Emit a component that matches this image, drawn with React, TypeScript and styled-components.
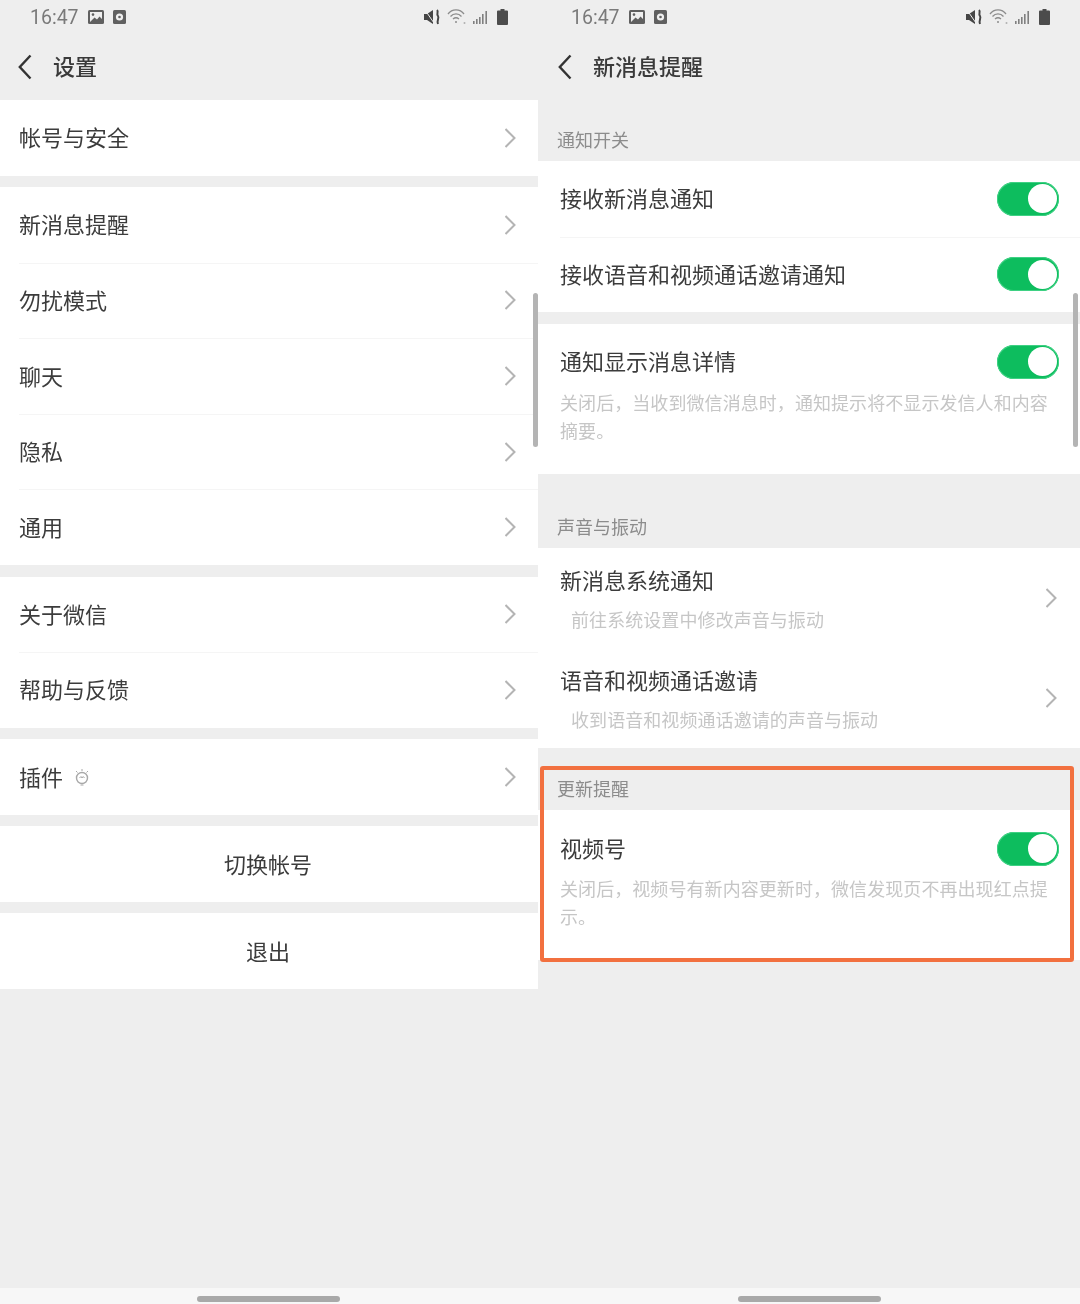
import React from "react";
import styled, { createGlobalStyle } from "styled-components";

const Global = createGlobalStyle`
  html, body { margin: 0; padding: 0; background: #eeeeee; }
  * { box-sizing: border-box; }
`;

const Screen = styled.div`
  display: grid;
  grid-template-columns: 538px 542px;
  width: 1080px;
  height: 1304px;
  overflow: hidden;
  font-family: "Noto Sans CJK SC", "Noto Sans", sans-serif;
  filter: blur(0.55px);
`;

const Panel = styled.section<{ $shift: number }>`
  --shift: ${(p) => p.$shift}px;
  position: relative;
  display: flex;
  flex-direction: column;
  height: 1304px;
  background: #eeeeee;
`;

const StatusBar = styled.div`
  display: flex;
  align-items: center;
  height: 34px;
  padding: 0 30px 0 calc(30px + var(--shift));
`;

const Time = styled.span`
  font-family: "Roboto", sans-serif;
  font-size: 19.5px;
  color: #7a7a7a;
`;

const StatusLeft = styled.div`
  display: flex;
  align-items: center;
  gap: 9px;
  flex: 1;
`;

const StatusRight = styled.div`
  display: flex;
  align-items: center;
  gap: 7px;
`;

const Header = styled.header`
  display: flex;
  align-items: center;
  height: 66px;
  padding-left: calc(18px + var(--shift) * 0.67);
`;

const HeaderTitle = styled.h1`
  margin: -4px 0 0 21px;
  font-size: 22px;
  line-height: 30px;
  font-weight: 500;
  color: #3a3a3a;
`;

const Scroll = styled.div`
  flex: 1;
`;

const Group = styled.div`
  background: #ffffff;
  margin-bottom: 11.5px;
`;

const Row = styled.div<{ $center?: boolean }>`
  display: flex;
  align-items: center;
  justify-content: ${(p) => (p.$center ? "center" : "space-between")};
  height: 75.6px;
  padding: 0 21px 0 calc(19px + var(--shift));
  position: relative;
  & + &::before {
    content: "";
    position: absolute;
    top: 0;
    left: calc(19px + var(--shift));
    right: 0;
    height: 1px;
    background: #f5f5f5;
  }
`;

const RowLabel = styled.span`
  display: flex;
  align-items: center;
  gap: 12px;
  margin-bottom: 3px;
  font-size: 22px;
  line-height: 30px;
  color: #3c3c3c;
`;

const Section = styled.div<{ $height: number }>`
  display: flex;
  align-items: flex-end;
  height: ${(p) => p.$height}px;
  padding: 0 0 9px 19px;
  font-size: 18px;
  line-height: 26px;
  color: #8c8c8c;
`;

const DetailRow = styled.div<{ $top: number; $height: number }>`
  position: relative;
  height: ${(p) => p.$height}px;
  padding: ${(p) => p.$top}px 21px 0 22px;
  background: #ffffff;
`;

const DetailHead = styled.div`
  display: flex;
  align-items: center;
  justify-content: space-between;
  height: 30px;
`;

const Description = styled.p<{ $gap: number }>`
  margin: ${(p) => p.$gap}px 0 0;
  width: 494px;
  font-size: 18px;
  line-height: 28px;
  letter-spacing: 0.07px;
  color: #c6c6c6;
`;

const LinkRow = styled.div<{ $height: number }>`
  display: flex;
  align-items: center;
  justify-content: space-between;
  height: ${(p) => p.$height}px;
  padding: 0 22px 0 22px;
  background: #ffffff;
  position: relative;
  & + &::before {
    content: "";
    position: absolute;
    top: 0;
    left: 22px;
    right: 0;
    height: 1px;
    background: #f5f5f5;
  }
`;

const LinkText = styled.div`
  display: flex;
  flex-direction: column;
  padding-top: 1px;
`;

const LinkSub = styled.span`
  margin: 8px 0 0 11px;
  font-size: 18px;
  line-height: 28px;
  letter-spacing: 0.07px;
  color: #c6c6c6;
`;

const Switch = styled.span`
  display: flex;
  justify-content: flex-end;
  align-items: center;
  width: 62px;
  height: 34px;
  padding-right: 2px;
  border-radius: 17px;
  background: #0dbd5e;
  box-shadow: inset 0 0 0 1px #3fd184;
`;

const Knob = styled.span`
  width: 29px;
  height: 29px;
  border-radius: 50%;
  background: #ffffff;
`;

const NavBar = styled.div`
  display: flex;
  justify-content: center;
  align-items: flex-end;
  height: 16px;
  padding: 0 calc(2px - var(--shift) * 0.67) 2px 0;
  background: #f7f7f7;
`;

const Pill = styled.span`
  width: 143px;
  height: 6px;
  border-radius: 3px;
  background: #a9a9a9;
`;

const ScrollThumb = styled.span<{ $left: number }>`
  position: absolute;
  left: ${(p) => p.$left}px;
  top: 293px;
  width: 5px;
  height: 154px;
  border-radius: 3px;
  background: #b4b4b4;
`;

const Highlight = styled.div`
  position: absolute;
  left: 2px;
  top: 766px;
  width: 534px;
  height: 196px;
  border: 4px solid #f2703f;
  border-radius: 3px;
  pointer-events: none;
`;

const PluginSvg = styled.svg`
  margin-top: 4px;
  margin-left: -1px;
`;

const BatterySvg = styled.svg`
  margin-left: 2px;
`;

const Chevron = () => (
  <svg width="12" height="22" viewBox="0 0 12 22" fill="none">
    <path d="M.5 2 9.5 11 .5 20" stroke="#b4b4b4" strokeWidth="2" />
  </svg>
);

const Back = () => (
  <svg width="14" height="26" viewBox="0 0 14 26" fill="none">
    <path d="M12.5 1.5 1.8 13 12.5 24.5" stroke="#333333" strokeWidth="2.4" />
  </svg>
);

const Status = () => (
  <StatusBar>
    <StatusLeft>
      <Time>16:47</Time>
      <svg width="16" height="14" viewBox="0 0 16 14">
        <rect width="16" height="14" rx="1.5" fill="#606060" />
        <rect x="2" y="2" width="12" height="10" fill="#f0f0f0" />
        <circle cx="5" cy="4.6" r="1.3" fill="#606060" />
        <path d="M2 12 6.5 7.5 9 9.5 11.5 6.5 14 9V12Z" fill="#606060" />
      </svg>
      <svg width="13" height="14" viewBox="0 0 13 14">
        <rect width="13" height="14" rx="1.5" fill="#606060" />
        <circle cx="6.5" cy="7" r="3.6" fill="#f0f0f0" />
        <circle cx="6.5" cy="7" r="1.3" fill="#606060" />
      </svg>
    </StatusLeft>
    <StatusRight>
      <svg width="16" height="16" viewBox="0 0 16 16" fill="none">
        <path d="M0 5H3L9 1V15L3 11H0Z" fill="#454545" />
        <path d="M1 1 10 14" stroke="#eeeeee" strokeWidth="1" />
        <path d="M13 1C15 3 12 5 14 7 15.5 9 12.5 11 14 15" stroke="#454545" strokeWidth="2" />
      </svg>
      <svg width="19" height="16" viewBox="0 0 19 16" fill="none" stroke="#8c8c8c" strokeWidth="1.3">
        <path d="M1 5C5-.5 13-.5 17 5" />
        <path d="M3.5 7.5C6.5 4 11.5 4 14.5 7.5" />
        <path d="M6 10C8 8.3 10 8.3 12 10" />
        <circle cx="9" cy="13" r="1" fill="#8c8c8c" stroke="none" />
        <circle cx="17.5" cy="14" r="1" fill="#b0b0b0" stroke="none" />
      </svg>
      <svg width="15" height="14" viewBox="0 0 15 14" fill="#808080">
        <rect x="0" y="11" width="1.6" height="3" />
        <rect x="3" y="9" width="1.6" height="5" />
        <rect x="6" y="7" width="1.6" height="7" />
        <rect x="9" y="4" width="1.6" height="10" />
        <rect x="12.4" y="1" width="1.6" height="13" />
      </svg>
      <BatterySvg width="11" height="16" viewBox="0 0 11 16" fill="#4c4c4c">
        <path d="M3.5 0H7.5V1.5H10A1 1 0 0 1 11 2.5V15A1 1 0 0 1 10 16H1A1 1 0 0 1 0 15V2.5A1 1 0 0 1 1 1.5H3.5Z" />
      </BatterySvg>
    </StatusRight>
  </StatusBar>
);

const PluginIcon = () => (
  <PluginSvg width="16" height="20" viewBox="0 0 16 20" fill="none" stroke="#a8a8a8">
    <circle cx="8" cy="10" r="5.5" strokeWidth="1.4" />
    <path d="M5.5 10 7 8.5 8 10 9.2 8.5 10.5 10" strokeWidth="1" />
    <path d="M8 1V3M2 3 3.5 4.5M14 3 12.5 4.5M6.5 17H9.5" strokeWidth="1" />
  </PluginSvg>
);

const Toggle = () => (
  <Switch>
    <Knob />
  </Switch>
);

const leftGroups: string[][] = [
  ["帐号与安全"],
  ["新消息提醒", "勿扰模式", "聊天", "隐私", "通用"],
  ["关于微信", "帮助与反馈"],
];

const App = () => (
  <>
    <Global />
    <Screen>
      <Panel $shift={0}>
        <Status />
        <Header>
          <Back />
          <HeaderTitle>设置</HeaderTitle>
        </Header>
        <Scroll>
          {leftGroups.map((g) => (
            <Group key={g[0]}>
              {g.map((t) => (
                <Row key={t}>
                  <RowLabel>{t}</RowLabel>
                  <Chevron />
                </Row>
              ))}
            </Group>
          ))}
          <Group>
            <Row>
              <RowLabel>
                插件
                <PluginIcon />
              </RowLabel>
              <Chevron />
            </Row>
          </Group>
          <Group>
            <Row $center>
              <RowLabel>切换帐号</RowLabel>
            </Row>
          </Group>
          <Group>
            <Row $center>
              <RowLabel>退出</RowLabel>
            </Row>
          </Group>
        </Scroll>
        <NavBar>
          <Pill />
        </NavBar>
        <ScrollThumb $left={533} />
      </Panel>

      <Panel $shift={3}>
        <Status />
        <Header>
          <Back />
          <HeaderTitle>新消息提醒</HeaderTitle>
        </Header>
        <Scroll>
          <Section $height={61}>通知开关</Section>
          <Group>
            <Row>
              <RowLabel>接收新消息通知</RowLabel>
              <Toggle />
            </Row>
            <Row>
              <RowLabel>接收语音和视频通话邀请通知</RowLabel>
              <Toggle />
            </Row>
          </Group>
          <DetailRow $top={23} $height={150}>
            <DetailHead>
              <RowLabel>通知显示消息详情</RowLabel>
              <Toggle />
            </DetailHead>
            <Description $gap={11}>关闭后，当收到微信消息时，通知提示将不显示发信人和内容摘要。</Description>
          </DetailRow>
          <Section $height={74}>声音与振动</Section>
          <LinkRow $height={101}>
            <LinkText>
              <RowLabel>新消息系统通知</RowLabel>
              <LinkSub>前往系统设置中修改声音与振动</LinkSub>
            </LinkText>
            <Chevron />
          </LinkRow>
          <LinkRow $height={99}>
            <LinkText>
              <RowLabel>语音和视频通话邀请</RowLabel>
              <LinkSub>收到语音和视频通话邀请的声音与振动</LinkSub>
            </LinkText>
            <Chevron />
          </LinkRow>
          <Section $height={62}>更新提醒</Section>
          <DetailRow $top={24} $height={150}>
            <DetailHead>
              <RowLabel>视频号</RowLabel>
              <Toggle />
            </DetailHead>
            <Description $gap={10}>关闭后，视频号有新内容更新时，微信发现页不再出现红点提示。</Description>
          </DetailRow>
        </Scroll>
        <NavBar>
          <Pill />
        </NavBar>
        <ScrollThumb $left={535} />
        <Highlight />
      </Panel>
    </Screen>
  </>
);

export default App;
